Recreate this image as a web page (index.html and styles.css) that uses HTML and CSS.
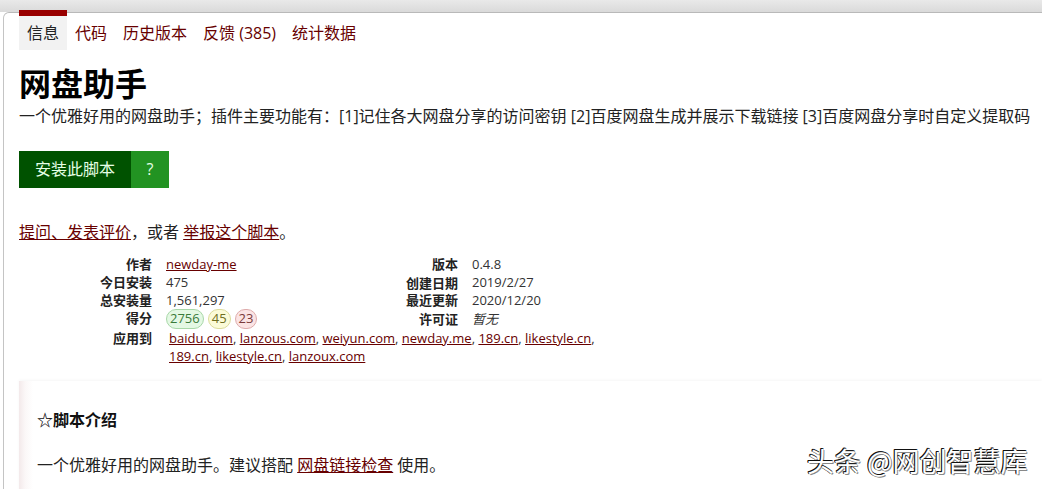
FILE: index.html
```html
<!DOCTYPE html>
<html lang="zh-CN">
<head>
<meta charset="utf-8">
<title>网盘助手</title>
<link rel="stylesheet" href="styles.css">
</head>
<body>
<div class="topband"></div>
<div class="panel">
  <ul class="tabs">
    <li class="tab current">信息</li>
    <li class="tab"><a href="#">代码</a></li>
    <li class="tab"><a href="#">历史版本</a></li>
    <li class="tab"><a href="#">反馈 (385)</a></li>
    <li class="tab"><a href="#">统计数据</a></li>
  </ul>

  <h2 class="title">网盘助手</h2>
  <p class="desc">一个优雅好用的网盘助手；插件主要功能有：[1]记住各大网盘分享的访问密钥 [2]百度网盘生成并展示下载链接 [3]百度网盘分享时自定义提取码</p>

  <div class="install">
    <a class="install-link" href="#">安装此脚本</a><a class="install-help" href="#">?</a>
  </div>

  <p class="report"><a href="#">提问、发表评价</a>，或者 <a href="#">举报这个脚本</a>。</p>

  <dl class="meta">
    <dt>作者</dt><dd><a href="#">newday-me</a></dd>
    <dt>版本</dt><dd>0.4.8</dd>
    <dt>今日安装</dt><dd>475</dd>
    <dt>创建日期</dt><dd>2019/2/27</dd>
    <dt>总安装量</dt><dd>1,561,297</dd>
    <dt>最近更新</dt><dd>2020/12/20</dd>
    <dt>得分</dt><dd class="scores"><span class="pill good">2756</span><span class="pill ok">45</span><span class="pill bad">23</span></dd>
    <dt>许可证</dt><dd class="license">暂无</dd>
    <dt>应用到</dt><dd class="applies"><a href="#">baidu.com</a>, <a href="#">lanzous.com</a>, <a href="#">weiyun.com</a>, <a href="#">newday.me</a>, <a href="#">189.cn</a>, <a href="#">likestyle.cn</a>, <a href="#">189.cn</a>, <a href="#">likestyle.cn</a>, <a href="#">lanzoux.com</a></dd>
  </dl>

  <div class="intro">
    <h3 class="intro-title">☆脚本介绍</h3>
    <p class="intro-text">一个优雅好用的网盘助手。建议搭配 <a href="#">网盘链接检查</a> 使用。</p>
  </div>
</div>
<div class="watermark">头条 @网创智慧库</div>
</body>
</html>
```

FILE: styles.css
```css
html, body {
  margin: 0;
  padding: 0;
  background: #fff;
}
body {
  position: relative;
  font-family: "Open Sans", "Noto Sans CJK SC", sans-serif;
  color: #222;
  overflow: hidden;
  height: 489px;
}
a {
  color: #670000;
}
.topband {
  height: 12px;
  background: linear-gradient(to bottom, #e9e9e9, #dadada);
}
.panel {
  margin-left: 3px;
  border-left: 1px solid #c4c4c4;
  border-top: 1px solid #b9b9b9;
  border-top-left-radius: 6px;
  padding-left: 15px;
  min-height: 600px;
}
.tabs {
  list-style: none;
  margin: -3px 0 0;
  padding: 0;
  display: flex;
  align-items: flex-end;
}
.tab {
  font-size: 16px;
  line-height: 22px;
  padding: 6px 8px;
  border-top: 6px solid transparent;
}
.tab a {
  text-decoration: none;
  color: #670000;
}
.tab.current {
  border-top-color: #990000;
  background: #f2f2f2;
  color: #222;
}
.title {
  margin: 15px 0 0;
  font-size: 32px;
  line-height: 38px;
  font-weight: bold;
  color: #000;
}
.desc {
  margin: 2px 0 0;
  font-size: 16px;
  line-height: 22px;
  white-space: nowrap;
}
.install {
  display: flex;
  margin-top: 24px;
}
.install-link, .install-help {
  display: block;
  height: 37px;
  line-height: 37px;
  font-size: 16px;
  color: #e6ffe6;
  text-decoration: none;
}
.install-link {
  background: #005200;
  padding: 0 16px;
}
.install-help {
  background: #229322;
  width: 38px;
  text-align: center;
}
.report {
  margin: 33px 0 0;
  font-size: 16px;
  line-height: 22px;
}
.meta {
  display: grid;
  grid-template-columns: 133px 145px 133px 159px;
  grid-template-rows: 18px 18px 18px 20px auto;
  column-gap: 14px;
  margin: 12px 0 0;
  font-size: 13px;
  line-height: 18px;
  color: #333;
}
.meta dt {
  text-align: right;
  font-weight: bold;
  color: #222;
}
.meta dd {
  margin: 0;
}
.meta .applies {
  grid-column: 2 / -1;
  padding-left: 3px;
}
.scores {
  display: flex;
  gap: 4px;
}
.pill {
  display: inline-block;
  line-height: 17px;
  padding: 0 3px;
  border-radius: 10px;
  border: 1px solid;
}
.pill.good {
  background: #e4f8e4;
  border-color: #a8d8a8;
  color: #3a7a3a;
}
.pill.ok {
  background: #fbfbd8;
  border-color: #dcdc9c;
  color: #6e6e20;
}
.pill.bad {
  background: #fbe4e4;
  border-color: #deacac;
  color: #7a3a3a;
}
.license {
  font-style: italic;
}
.meta dt:nth-of-type(4), .meta dt:nth-of-type(8), .meta dd.license {
  line-height: 20px;
}
.intro {
  margin-top: 16px;
  padding: 28px 18px 20px;
  background: linear-gradient(to right, #f3e9ea, #fbf7f7 6px, #fff 14px);
  box-shadow: 0 -1px 3px rgba(0, 0, 0, 0.04);
}
.intro-title {
  margin: 0;
  font-size: 16px;
  line-height: 22px;
  font-weight: bold;
  color: #111;
}
.intro-text {
  margin: 23px 0 0;
  font-size: 16px;
  line-height: 22px;
}
.watermark {
  position: absolute;
  left: 807px;
  top: 444px;
  font-family: "Noto Sans CJK SC", sans-serif;
  font-size: 27px;
  line-height: 34px;
  color: #fff;
  text-shadow: -1px -1px 0 #111, 1px 1px 0 #888, -1px 0 0 #333, 0 -1px 0 #333;
  white-space: nowrap;
}
```
